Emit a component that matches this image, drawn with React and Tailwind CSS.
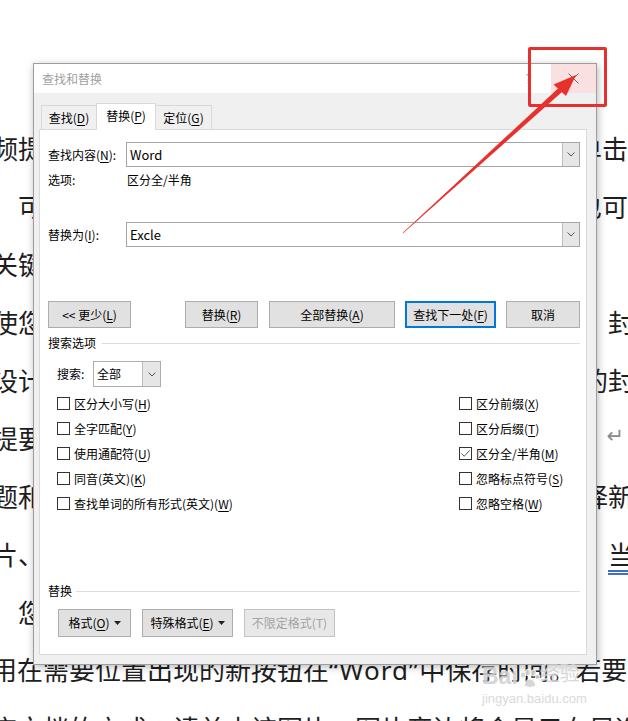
import React from "react";

const U = ({ children }) => (
  <span className="underline underline-offset-[2px] decoration-[1px]">{children}</span>
);

function Chevron() {
  return (
    <svg width="8" height="5" viewBox="0 0 8 5">
      <path d="M0.5 0.5 L4 4 L7.5 0.5" fill="none" stroke="#555" strokeWidth="1" />
    </svg>
  );
}

function Tri() {
  return (
    <svg width="7" height="4" viewBox="0 0 7 4" className="ml-[4px]">
      <path d="M0 0 L7 0 L3.5 4 Z" fill="#222" />
    </svg>
  );
}

function Combo({ value }) {
  return (
    <div className="flex-1 h-full flex border border-[#a5a5a5] bg-white">
      <span className="flex-1 flex items-center pl-[3px] text-[13px] text-black">{value}</span>
      <span className="w-[17px] h-full bg-[#e6e6e6] border-l border-[#bcbcbc] flex items-center justify-center">
        <Chevron />
      </span>
    </div>
  );
}

function Check({ checked }) {
  return (
    <span className="w-[13px] h-[13px] border border-[#333] bg-white flex items-center justify-center shrink-0">
      {checked && (
        <svg width="11" height="11" viewBox="0 0 11 11">
          <path d="M1.5 5.5 L4.2 8.3 L9.6 2.4" fill="none" stroke="#555" strokeWidth="1" />
        </svg>
      )}
    </span>
  );
}

function CheckRow({ checked, children }) {
  return (
    <div className="h-[25px] flex items-center gap-[4px]">
      <Check checked={checked} />
      <span>{children}</span>
    </div>
  );
}

function Btn({ w, children, className = "" }) {
  return (
    <div className={`${w} h-full flex items-center justify-center bg-[#e1e1e1] border border-[#adadad] ${className}`}>
      {children}
    </div>
  );
}

function Doc() {
  return (
    <div className="flex flex-col pt-[118px] text-[26px] text-[#1e1e1e] font-['Noto_Sans_CJK_SC',sans-serif]">
      <div className="flex justify-between items-center h-[58px] whitespace-nowrap">
        <span className="ml-[-8px]">频提</span>
        <span>单击</span>
      </div>
      <div className="flex justify-between items-center h-[58px] whitespace-nowrap">
        <span className="ml-[-8px]">　可</span>
        <span>也可</span>
      </div>
      <div className="flex justify-between items-center h-[58px] whitespace-nowrap">
        <span className="ml-[-8px]">关键</span>
        <span></span>
      </div>
      <div className="flex justify-between items-center h-[58px] whitespace-nowrap">
        <span className="ml-[-8px]">使您</span>
        <span className="mr-[-6px]">封</span>
      </div>
      <div className="flex justify-between items-center h-[58px] whitespace-nowrap">
        <span className="ml-[-8px]">设计</span>
        <span className="mr-[-6px]">的封</span>
      </div>
      <div className="flex justify-between items-center h-[58px] whitespace-nowrap">
        <span className="ml-[-8px]">提要</span>
        <span className="mr-[4px] text-[21px] text-[#8c8c8c] font-['DejaVu_Sans',sans-serif]">↵</span>
      </div>
      <div className="flex justify-between items-center h-[58px] whitespace-nowrap">
        <span className="ml-[-8px]">题和</span>
        <span className="mr-[-6px]">择新</span>
      </div>
      <div className="flex justify-between items-center h-[58px] whitespace-nowrap">
        <span className="ml-[-8px]">片、</span>
        <span className="mr-[-6px] underline decoration-double decoration-[#3f6fc6] underline-offset-[5px]">当</span>
      </div>
      <div className="flex justify-between items-center h-[58px] whitespace-nowrap">
        <span className="ml-[-8px]">　您</span>
        <span></span>
      </div>
      <div className="flex items-center h-[58px] whitespace-nowrap">
        <span className="ml-[-9px]">
          用在需要位置出现的新按钮在
          <span className="font-['Noto_Sans',sans-serif] tracking-[1px]">“Word”</span>
          中保存时间。若要
        </span>
      </div>
      <div className="flex items-center h-[58px] whitespace-nowrap">
        <span className="ml-[-9px]">应文档的方式，请单击该图片，图片旁边将会显示布局选项</span>
      </div>
    </div>
  );
}

function Dialog() {
  return (
    <div className="absolute left-[33px] top-[63px] w-[564px] h-[602px] border border-[#9d9d9d] bg-[#f0f0f0] shadow-[1px_2px_8px_rgba(0,0,0,0.28)] flex flex-col text-[12px] text-black font-['Noto_Sans_CJK_SC',sans-serif]">
      <div className="h-[29px] bg-white flex items-center shrink-0">
        <span className="pl-[8px] flex-1 text-[#a0a0a0]">查找和替换</span>
        <span className="w-[45px] h-full flex items-center justify-center text-[13px] text-[#9a9a9a]">?</span>
        <span className="w-[45px] h-full bg-[#fae0e0] flex items-center justify-center">
          <svg width="11" height="11" viewBox="0 0 11 11">
            <path d="M0.5 0.5 L10.5 10.5 M10.5 0.5 L0.5 10.5" stroke="#6a6a6a" strokeWidth="1" />
          </svg>
        </span>
      </div>

      <div className="flex-1 flex flex-col pt-[10px] pl-[5px]">
        <div className="flex items-end h-[27px] pl-[2px]">
          <div className="w-[56px] h-[25px] border-t border-l border-r border-[#d9d9d9] bg-[#f0f0f0] flex items-center justify-center">
            查找(<U>D</U>)
          </div>
          <div className="relative z-10 ml-[-1px] w-[60px] h-[27px] border-t border-l border-r border-[#d9d9d9] bg-white flex items-center justify-center pb-[2px]">
            替换(<U>P</U>)
          </div>
          <div className="ml-[-1px] w-[57px] h-[25px] border-t border-l border-r border-[#d9d9d9] bg-[#f0f0f0] flex items-center justify-center">
            定位(<U>G</U>)
          </div>
        </div>

        <div className="w-[548px] h-[526px] mt-[-1px] bg-white border border-[#d9d9d9] pl-[8px] pr-[6px] flex flex-col">
          <div className="mt-[12px] flex items-center h-[25px]">
            <span className="w-[78px]">查找内容(<U>N</U>):</span>
            <Combo value="Word" />
          </div>
          <div className="mt-[5px] flex items-center h-[16px]">
            <span className="w-[79px]">选项:</span>
            <span>区分全/半角</span>
          </div>
          <div className="mt-[34px] flex items-center h-[25px]">
            <span className="w-[78px]">替换为(<U>I</U>):</span>
            <Combo value="Excle" />
          </div>

          <div className="mt-[54px] flex h-[27px]">
            <Btn w="w-[83px]">&lt;&lt; 更少(<U>L</U>)</Btn>
            <Btn w="w-[73px]" className="ml-[54px]">替换(<U>R</U>)</Btn>
            <Btn w="w-[126px]" className="ml-[11px]">全部替换(<U>A</U>)</Btn>
            <div className="ml-[10px] w-[91px] h-full flex items-center justify-center bg-[#e1e1e1] border-2 border-[#0078d7]">
              查找下一处(<U>F</U>)
            </div>
            <Btn w="w-[74px]" className="ml-[10px]">取消</Btn>
          </div>

          <div className="mt-[6px] flex items-center h-[18px]">
            <span>搜索选项</span>
            <div className="flex-1 h-px bg-[#dcdcdc] ml-[6px]" />
          </div>

          <div className="mt-[9px] flex items-center h-[26px] pl-[9px]">
            <span className="w-[36px]">搜索:</span>
            <div className="w-[68px] h-full flex border border-[#adadad] bg-white">
              <span className="flex-1 flex items-center pl-[3px]">全部</span>
              <span className="w-[18px] h-full bg-[#e6e6e6] border-l border-[#bcbcbc] flex items-center justify-center">
                <Chevron />
              </span>
            </div>
          </div>

          <div className="mt-[4px] flex">
            <div className="w-[411px] pl-[9px] flex flex-col">
              <CheckRow>区分大小写(<U>H</U>)</CheckRow>
              <CheckRow>全字匹配(<U>Y</U>)</CheckRow>
              <CheckRow>使用通配符(<U>U</U>)</CheckRow>
              <CheckRow>同音(英文)(<U>K</U>)</CheckRow>
              <CheckRow>查找单词的所有形式(英文)(<U>W</U>)</CheckRow>
            </div>
            <div className="flex flex-col">
              <CheckRow>区分前缀(<U>X</U>)</CheckRow>
              <CheckRow>区分后缀(<U>T</U>)</CheckRow>
              <CheckRow checked>区分全/半角(<U>M</U>)</CheckRow>
              <CheckRow>忽略标点符号(<U>S</U>)</CheckRow>
              <CheckRow>忽略空格(<U>W</U>)</CheckRow>
            </div>
          </div>

          <div className="mt-[66px] flex items-center h-[18px]">
            <span>替换</span>
            <div className="flex-1 h-px bg-[#dcdcdc] ml-[4px]" />
          </div>

          <div className="mt-[9px] flex h-[28px] pl-[10px] gap-[11px]">
            <Btn w="w-[73px]">
              格式(<U>O</U>)<Tri />
            </Btn>
            <Btn w="w-[91px]">
              特殊格式(<U>E</U>)<Tri />
            </Btn>
            <div className="w-[91px] h-full flex items-center justify-center bg-[#e8e8e8] border border-[#c2c2c2] text-[#a3a3a3]">
              不限定格式(T)
            </div>
          </div>
        </div>
      </div>
    </div>
  );
}

function Watermark() {
  return (
    <div className="absolute left-[482px] top-[648px] flex flex-col items-start opacity-90 pointer-events-none">
      <div className="flex items-end h-[40px]">
        <span className="font-['Liberation_Sans',sans-serif] font-bold text-[23px] leading-[23px] text-[#d2d2d2] [text-shadow:0_0_2px_#ffffff]">
          Bai
        </span>
        <div className="flex flex-col items-center mb-[1px]">
          <svg width="22" height="20" viewBox="0 0 22 20" className="mb-[-2px]">
            <ellipse cx="5" cy="6" rx="2.6" ry="3.2" fill="#d2d2d2" stroke="#fff" strokeWidth="1" />
            <ellipse cx="10" cy="3.5" rx="2.6" ry="3.2" fill="#d2d2d2" stroke="#fff" strokeWidth="1" />
            <ellipse cx="15.5" cy="4" rx="2.6" ry="3.2" fill="#d2d2d2" stroke="#fff" strokeWidth="1" />
            <ellipse cx="19.5" cy="8" rx="2.2" ry="2.8" fill="#d2d2d2" stroke="#fff" strokeWidth="1" />
            <path d="M6 17 Q8 10 12 10 Q16 10 18 17 Q12 20 6 17 Z" fill="#d2d2d2" stroke="#fff" strokeWidth="1" />
          </svg>
        </div>
        <span className="text-[20px] leading-[22px] mb-[4px] text-[#d2d2d2] [text-shadow:0_0_2px_#ffffff] font-['Noto_Sans_CJK_SC',sans-serif]">
          经验
        </span>
      </div>
      <span className="mt-[4px] text-[13px] leading-[14px] text-[#d6d6d6] font-['Liberation_Sans',sans-serif] [text-shadow:0_0_2px_#ffffff]">
        jingyan.baidu.com
      </span>
    </div>
  );
}

function Overlay() {
  return (
    <svg
      className="absolute left-0 top-0 pointer-events-none"
      width="628"
      height="721"
      viewBox="0 0 628 721"
    >
      <polygon points="562,92 558.5,88 402.8,232.8 403.2,233.3" fill="#e8302c" />
      <polygon points="576,75 566,96 553.5,84.5" fill="#e8302c" />
    </svg>
  );
}

export default function App() {
  return (
    <div className="relative w-[628px] h-[721px] overflow-hidden bg-white">
      <Doc />
      <Dialog />
      <Watermark />
      <div className="absolute left-[528px] top-[47px] w-[79px] h-[60px] border-[3px] border-[#e5302f] rounded-[2px] pointer-events-none" />
      <Overlay />
    </div>
  );
}
